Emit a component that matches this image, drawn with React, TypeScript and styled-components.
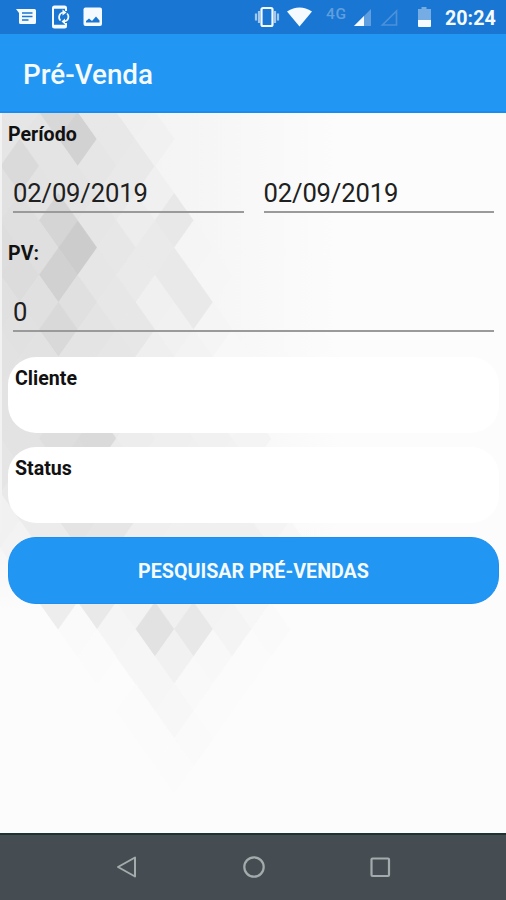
import React from "react";
import styled, { createGlobalStyle } from "styled-components";

const GlobalStyle = createGlobalStyle`
  * { box-sizing: border-box; }
  body { margin: 0; background: #fcfcfc; }
`;

const Screen = styled.div`
  display: flex;
  flex-direction: column;
  width: 506px;
  height: 900px;
  overflow: hidden;
  font-family: Roboto, sans-serif;
  color: #111;
`;

const StatusBar = styled.header`
  flex: none;
  display: flex;
  align-items: center;
  justify-content: space-between;
  height: 34px;
  padding: 0 10px 0 15px;
  background: #1976d2;
`;

const StatusGroup = styled.div`
  display: flex;
  align-items: center;
  height: 100%;
`;

const Icon = styled.svg<{ $gap?: number }>`
  display: block;
  flex: none;
  margin-left: ${(p) => p.$gap ?? 0}px;
`;

const NetworkLabel = styled.span`
  margin: 0 0 7px 13px;
  width: 22px;
  font-size: 15.5px;
  line-height: 16px;
  font-weight: 500;
  letter-spacing: 0.6px;
  color: #609fdf;
`;

const Clock = styled.span`
  margin: 3px 0 0 13px;
  width: 51px;
  font-size: 19.7px;
  line-height: 24px;
  font-weight: 700;
  white-space: nowrap;
  color: #f5faff;
`;

const AppBar = styled.div`
  flex: none;
  display: flex;
  align-items: center;
  height: 79px;
  padding: 4px 23px 0;
  background: #2196f3;
  border-bottom: 2px solid #178df2;
`;

const Title = styled.h1`
  margin: 0;
  font-size: 27.8px;
  line-height: 34px;
  font-weight: 500;
  color: #f5faff;
`;

const Content = styled.main`
  position: relative;
  flex: 1;
  display: flex;
  flex-direction: column;
  padding: 10px 7px 0 8px;
  background: #fcfcfc;
`;

const Backdrop = styled.svg`
  position: absolute;
  inset: 0;
  pointer-events: none;
`;

const Form = styled.form`
  position: relative;
  display: flex;
  flex-direction: column;
`;

const Label = styled.label`
  height: 24px;
  font-size: 19.6px;
  line-height: 24px;
  font-weight: 700;
`;

const FieldRow = styled.div<{ $below: number }>`
  display: flex;
  gap: 20px;
  margin: 24px 5px ${(p) => p.$below}px;
`;

const Field = styled.div`
  flex: 1;
  height: 42px;
  padding-top: 6px;
  border-bottom: 2px solid #9a9a9a;
  font-size: 25.6px;
  line-height: 32px;
  letter-spacing: -0.15px;
  font-weight: 400;
  color: #202020;
`;

const Card = styled.section`
  height: 76px;
  margin-bottom: 14px;
  padding: 10px 7px;
  border-radius: 28px;
  background: #fff;
`;

const SearchButton = styled.button`
  height: 67px;
  margin-top: 0;
  padding: 2px 0 0;
  border: 1px solid #1b90f2;
  border-radius: 28px;
  background: #2196f3;
  font: 700 19.7px/24px Roboto, sans-serif;
  color: #f5faff;
`;

const NavBar = styled.nav`
  flex: none;
  display: flex;
  align-items: center;
  justify-content: center;
  gap: 102.500px;
  height: 67px;
  padding: 0 0 2px 1px;
  border-top: 2px solid #1f3233;
  background: #454d52;
`;

// Rhombus tiles: [column, row, grey level]
const HALF_W = 19.3;
const HALF_H = 27.25;
const tiles: [number, number, number][] = [
  [0, 0, 229], [2, 0, 228], [1, -1, 230], [3, -1, 216], [4, 0, 210], [5, -1, 232], [6, 0, 232],
  [1, 1, 218], [3, 1, 228], [5, 1, 230], [7, 1, 233], [7, -1, 240], [8, 0, 241],
  [0, 2, 225], [2, 2, 227], [4, 2, 228], [6, 2, 233], [8, 2, 240],
  [1, 3, 223], [3, 3, 213], [5, 3, 230], [7, 3, 237], [9, 3, 232],
  [0, 4, 221], [2, 4, 223], [4, 4, 204], [6, 4, 231], [8, 4, 234], [10, 4, 245],
  [1, 5, 220], [3, 5, 209], [5, 5, 230], [7, 5, 234], [9, 5, 233], [11, 5, 246],
  [0, 6, 224], [2, 6, 224], [4, 6, 224], [6, 6, 231], [8, 6, 240], [10, 6, 233],
  [1, 7, 225], [3, 7, 217], [5, 7, 228], [7, 7, 231], [9, 7, 241], [11, 7, 245],
  [0, 8, 226], [2, 8, 226], [4, 8, 228], [6, 8, 230], [8, 8, 239], [10, 8, 243], [12, 8, 248],
  [1, 9, 227], [3, 9, 224], [5, 9, 227], [7, 9, 234], [9, 9, 240], [11, 9, 245],
  [0, 10, 227], [2, 10, 226], [4, 10, 222], [6, 10, 234], [8, 10, 239], [10, 10, 241], [12, 10, 245],
  [1, 11, 227], [3, 11, 222], [5, 11, 218], [7, 11, 237], [9, 11, 239], [11, 11, 241], [13, 11, 244],
  [0, 12, 229], [2, 12, 227], [4, 12, 219], [6, 12, 235], [8, 12, 239], [10, 12, 240], [12, 12, 242],
  [1, 13, 233], [3, 13, 229], [5, 13, 230], [7, 13, 237], [9, 13, 239], [11, 13, 240], [13, 13, 243],
  [0, 14, 241], [2, 14, 236], [4, 14, 228], [6, 14, 230], [8, 14, 239], [10, 14, 240], [12, 14, 240], [14, 14, 244],
  [1, 15, 243], [3, 15, 236], [5, 15, 230], [7, 15, 239], [9, 15, 240], [11, 15, 240], [13, 15, 240], [15, 15, 247],
  [2, 16, 246], [4, 16, 243], [6, 16, 242], [8, 16, 242], [10, 16, 242], [12, 16, 243], [14, 16, 247],
  [3, 17, 237], [5, 17, 233], [7, 17, 243], [9, 17, 240], [11, 17, 243], [13, 17, 247],
  [4, 18, 250], [6, 18, 245], [8, 18, 226], [10, 18, 232], [12, 18, 244], [14, 18, 250],
  [5, 19, 251], [7, 19, 246], [9, 19, 241], [11, 19, 248], [13, 19, 251],
  [8, 20, 246], [10, 20, 249], [12, 20, 251], [7, 21, 251], [9, 21, 247], [11, 21, 251],
  [8, 22, 251], [10, 22, 250], [9, 23, 251],
];

const Diamonds = () => (
  <Backdrop width="506" height="720" viewBox="0 113 506 720" aria-hidden="true">
    <defs>
      <linearGradient id="fade">
        <stop offset="0" stopColor="#f2f2f2" />
        <stop offset="0.55" stopColor="#f5f5f5" />
        <stop offset="1" stopColor="#fcfcfc" />
      </linearGradient>
      <linearGradient id="drop" x1="0" y1="0" x2="0" y2="1">
        <stop offset="0.78" stopColor="#fcfcfc" stopOpacity="0" />
        <stop offset="1" stopColor="#fcfcfc" />
      </linearGradient>
    </defs>
    <rect y="113" width="340" height="500" fill="url(#fade)" />
    <rect y="113" width="340" height="501" fill="url(#drop)" />
    {tiles.map(([column, row, level]) => {
      const x = 0.5 + column * HALF_W;
      const y = 139 + row * HALF_H;
      const fill = `rgb(${level},${level},${level})`;
      return (
        <path
          key={`${column}:${row}`}
          d={`M${x} ${y - HALF_H}L${x + HALF_W} ${y}L${x} ${y + HALF_H}L${x - HALF_W} ${y}Z`}
          fill={fill}
          stroke={fill}
          strokeWidth="0.6"
        />
      );
    })}
    <rect y="113" width="2" height="420" fill="#f2f2f2" />
  </Backdrop>
);

export default function App() {
  return (
    <>
      <GlobalStyle />
      <Screen>
        <StatusBar>
          <StatusGroup>
            <Icon width="22" height="18" viewBox="0 0 22 18">
              <path fill="#f5faff" d="M1 1h18.500q1.500 0 1.500 1.500v12q0 1.500-1.500 1.500h-14q-1.500 0-1.500-1.500V5Z" />
              <path stroke="#1976d2" strokeWidth="1.600" d="M7 5h10.500M7 8.500h10.500M7 12h6.500" />
            </Icon>
            <Icon $gap={14} width="20" height="24" viewBox="0 0 20 24">
              <path fill="none" stroke="#f5faff" strokeWidth="2" d="M15 6V3q0-1.500-1.500-1.500h-10Q2 1.500 2 3v18q0 1.500 1.500 1.500h10q1.500 0 1.500-1.500v-3" />
              <path stroke="#f5faff" strokeWidth="2.500" d="M2 2.500h13M2 21h13" />
              <path fill="none" stroke="#f5faff" strokeWidth="1.700" d="M12 7.500a4.700 4.700 0 0 0-2.500 8M13.500 16.500a4.700 4.700 0 0 0 2.500-8" />
              <path fill="#f5faff" d="M11.500 4.500l4 3-4 3ZM14 13.500v6L10.500 16.500Z" />
            </Icon>
            <Icon $gap={12} width="20" height="20" viewBox="0 0 20 20">
              <rect x="0.500" y="0.500" width="18.500" height="18.500" rx="2" fill="#f5faff" />
              <path fill="#1976d2" d="M3 15.500v-1.500L6 11.500l3 2.500 4-4.500 3.500 4v2Z" />
            </Icon>
          </StatusGroup>
          <StatusGroup>
            <Icon width="26" height="22" viewBox="0 0 26 22">
              <path stroke="#a3c8ee" strokeWidth="2.200" d="M2 7.500v7M24 7.500v7M5 5v12M21 5v12" />
              <rect x="7.500" y="2" width="11" height="18" rx="1.500" fill="#1976d2" stroke="#f5faff" strokeWidth="2.200" />
            </Icon>
            <Icon $gap={6} width="27" height="20" viewBox="0 0 27 20">
              <path fill="#f5faff" d="M1 4.500Q13.500-3.500 26 4.500L13.500 19.500Z" />
            </Icon>
            <NetworkLabel>4G</NetworkLabel>
            <Icon $gap={4} width="20" height="20" viewBox="0 0 20 20">
              <path fill="#609fdf" d="M19 2v17H2Z" />
              <path fill="#f5faff" d="M12 9v10H2Z" />
            </Icon>
            <Icon $gap={7} width="20" height="20" viewBox="0 0 20 20">
              <path fill="none" stroke="#4b91da" strokeWidth="1.700" d="M17.500 4v14H3.500Z" />
            </Icon>
            <Icon $gap={18} width="15" height="22" viewBox="0 0 15 22">
              <path fill="#75ace4" d="M4.500 1h5v2H14v12H1V3h3.500Z" />
              <path fill="#f5faff" d="M1 14h13v6q0 1-1 1H2q-1 0-1-1Z" />
            </Icon>
            <Clock>20:24</Clock>
          </StatusGroup>
        </StatusBar>
        <AppBar>
          <Title>Pré-Venda</Title>
        </AppBar>
        <Content>
          <Diamonds />
          <Form>
            <Label>Período</Label>
            <FieldRow $below={29}>
              <Field>02/09/2019</Field>
              <Field>02/09/2019</Field>
            </FieldRow>
            <Label>PV:</Label>
            <FieldRow $below={25}>
              <Field>0</Field>
            </FieldRow>
            <Card>
              <Label>Cliente</Label>
            </Card>
            <Card>
              <Label>Status</Label>
            </Card>
            <SearchButton type="button">PESQUISAR PRÉ-VENDAS</SearchButton>
          </Form>
        </Content>
        <NavBar>
          <Icon width="24" height="24" viewBox="0 0 24 24">
            <path fill="none" stroke="#a5abad" strokeWidth="2" strokeLinejoin="round" d="M20 2.500v19L3 12Z" />
          </Icon>
          <Icon width="24" height="24" viewBox="0 0 24 24">
            <circle cx="12" cy="12" r="9.700" fill="none" stroke="#a5abad" strokeWidth="2.200" />
          </Icon>
          <Icon width="24" height="24" viewBox="0 0 24 24">
            <rect x="3.500" y="3.500" width="17.500" height="17.500" rx="1" fill="none" stroke="#a5abad" strokeWidth="2.200" />
          </Icon>
        </NavBar>
      </Screen>
    </>
  );
}
